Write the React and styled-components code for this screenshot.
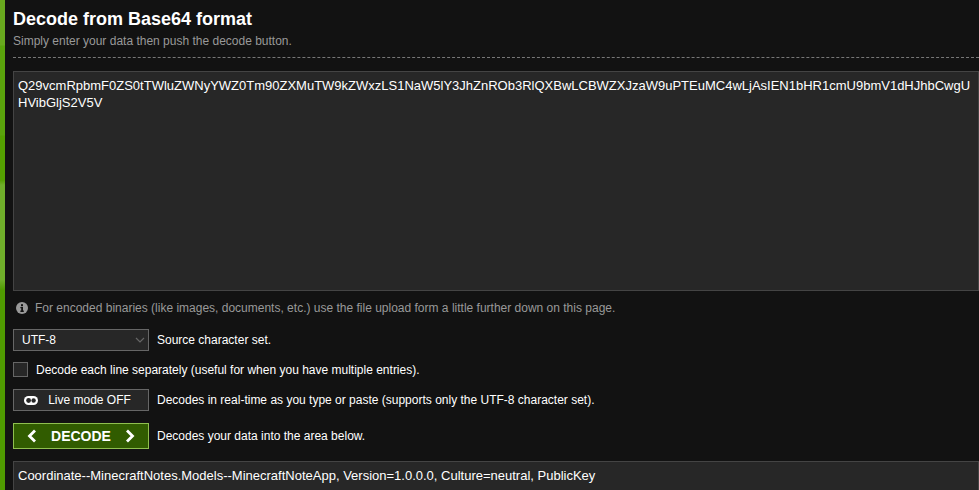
import React from "react";
import styled, { createGlobalStyle } from "styled-components";

const GlobalStyle = createGlobalStyle`
  html, body {
    margin: 0;
    padding: 0;
    height: 100%;
    overflow: hidden;
    background: #121212;
  }
  * {
    box-sizing: border-box;
  }
`;

const StyledPage = styled.div`
  width: 979px;
  height: 490px;
  display: flex;
  overflow: hidden;
  font-family: "Liberation Sans", Arial, sans-serif;
  font-size: 12px;
  color: #ffffff;
`;

const StyledStripe = styled.div`
  width: 5px;
  flex-shrink: 0;
  background: linear-gradient(
    180deg,
    #68a81e 0,
    #68a81e 45px,
    #5aa30c 46px,
    #5aa30c 135px,
    #54a000 136px,
    #54a000 180px,
    #6fae2a 185px,
    #6fae2a 280px,
    #4f9a00 290px,
    #4f9a00 100%
  );
`;

const StyledMain = styled.main`
  flex: 1;
  min-width: 0;
  padding: 9px 0 0 8px;
  background: #121212;
`;

const StyledTitle = styled.h1`
  margin: 0;
  font-size: 18px;
  line-height: 20px;
  font-weight: 700;
  color: #ffffff;
`;

const StyledSubtitle = styled.p`
  margin: 5px 0 0;
  font-size: 12px;
  line-height: 14px;
  color: #999999;
`;

const StyledDivider = styled.hr`
  margin: 9px 0 0;
  border: 0;
  border-top: 1px dashed #777777;
  height: 0;
`;

const StyledTextArea = styled.div`
  margin-top: 13px;
  height: 220px;
  padding: 5px 4px;
  background: #272727;
  border: 1px solid #444444;
  font-size: 13px;
  line-height: 17px;
  word-break: break-all;
  color: #ffffff;
`;

const StyledHint = styled.div`
  display: flex;
  align-items: center;
  gap: 7px;
  margin-top: 9px;
  padding-left: 3px;
  height: 16px;
  color: #999999;
  font-size: 12px;
`;

const StyledRow = styled.div`
  display: flex;
  align-items: center;
  gap: 8px;
  margin-top: ${(props) => props.$top}px;
  height: ${(props) => props.$height}px;
`;

const StyledSelect = styled.div`
  width: 136px;
  height: 22px;
  display: flex;
  align-items: center;
  justify-content: space-between;
  padding: 0 3px 0 8px;
  background: #272727;
  border: 1px solid #666666;
  font-size: 12px;
`;

const StyledCheckbox = styled.div`
  width: 15px;
  height: 15px;
  background: #272727;
  border: 1px solid #666666;
`;

const StyledButton = styled.div`
  width: 136px;
  height: ${(props) => (props.$primary ? 26 : 22)}px;
  display: flex;
  align-items: center;
  justify-content: center;
  gap: ${(props) => (props.$primary ? 14 : 10)}px;
  padding-right: ${(props) => (props.$primary ? 0 : 7)}px;
  background: ${(props) => (props.$primary ? "#315c00" : "#272727")};
  border: 1px solid ${(props) => (props.$primary ? "#8fc04f" : "#666666")};
  font-size: ${(props) => (props.$primary ? 14 : 12)}px;
  font-weight: ${(props) => (props.$primary ? 700 : 400)};
`;

const StyledOutput = styled(StyledTextArea)`
  margin-top: 12px;
  height: 40px;
`;

const InfoIcon = () => (
  <svg width="12" height="12" viewBox="0 0 12 12">
    <circle cx="6" cy="6" r="6" fill="#999999" />
    <rect x="5" y="2.2" width="2" height="2" fill="#121212" />
    <path d="M4.4 5h2.6v3.6h.8V10H4.4V8.6h.8V6.3h-.8z" fill="#121212" />
  </svg>
);

const ChevronDown = () => (
  <svg width="10" height="6" viewBox="0 0 10 6" fill="none">
    <path d="M1 1l4 4 4-4" stroke="#666666" strokeWidth="1.2" />
  </svg>
);

const ToggleIcon = () => (
  <svg width="14" height="9" viewBox="0 0 14 9">
    <rect x="0" y="0" width="14" height="9" rx="4.5" fill="#ffffff" />
    <circle cx="4.6" cy="4.5" r="2.4" fill="#272727" />
    <circle cx="9.6" cy="4.5" r="2.2" fill="#272727" />
  </svg>
);

const Chevron = ({ flip }) => (
  <svg width="10" height="14" viewBox="0 0 10 14" fill="none">
    <path d={flip ? "M2 1.5l5.5 5.5-5.5 5.5" : "M8 1.5L2.5 7 8 12.5"} stroke="#ffffff" strokeWidth="2.8" />
  </svg>
);

const App = () => {
  return (
    <StyledPage>
      <GlobalStyle />
      <StyledStripe />
      <StyledMain>
        <StyledTitle>Decode from Base64 format</StyledTitle>
        <StyledSubtitle>Simply enter your data then push the decode button.</StyledSubtitle>
        <StyledDivider />
        <StyledTextArea>
          Q29vcmRpbmF0ZS0tTWluZWNyYWZ0Tm90ZXMuTW9kZWxzLS1NaW5lY3JhZnROb3RlQXBwLCBWZXJzaW9uPTEuMC4wLjAsIEN1bHR1cmU9bmV1dHJhbCwgUHVibGljS2V5V
        </StyledTextArea>
        <StyledHint>
          <InfoIcon />
          For encoded binaries (like images, documents, etc.) use the file upload form a little further down on this page.
        </StyledHint>
        <StyledRow $top={13} $height={22}>
          <StyledSelect>
            UTF-8
            <ChevronDown />
          </StyledSelect>
          Source character set.
        </StyledRow>
        <StyledRow $top={11} $height={15}>
          <StyledCheckbox />
          Decode each line separately (useful for when you have multiple entries).
        </StyledRow>
        <StyledRow $top={12} $height={22}>
          <StyledButton>
            <ToggleIcon />
            Live mode OFF
          </StyledButton>
          Decodes in real-time as you type or paste (supports only the UTF-8 character set).
        </StyledRow>
        <StyledRow $top={12} $height={26}>
          <StyledButton $primary>
            <Chevron />
            DECODE
            <Chevron flip />
          </StyledButton>
          Decodes your data into the area below.
        </StyledRow>
        <StyledOutput>
          Coordinate--MinecraftNotes.Models--MinecraftNoteApp, Version=1.0.0.0, Culture=neutral, PublicKey
        </StyledOutput>
      </StyledMain>
    </StyledPage>
  );
};

export default App;
